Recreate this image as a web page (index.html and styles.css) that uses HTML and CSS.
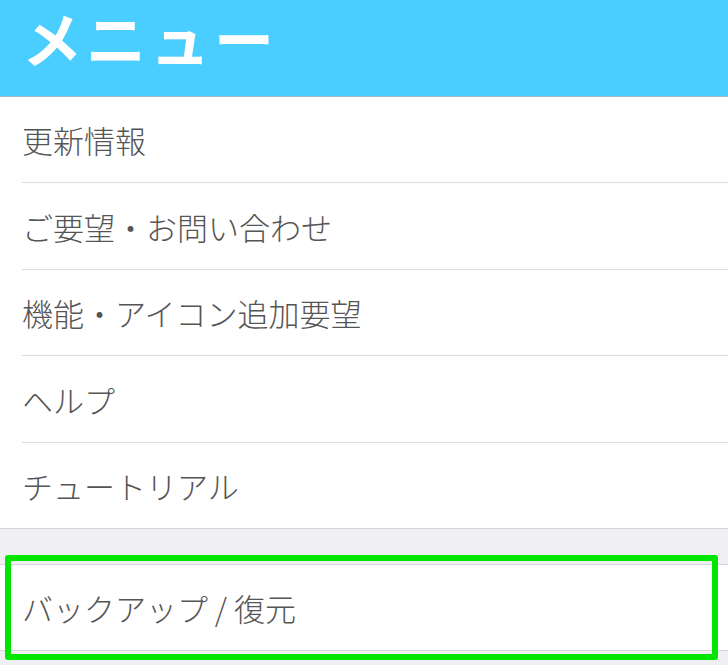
FILE: index.html
```html
<!DOCTYPE html>
<html lang="ja">
<head>
<meta charset="utf-8">
<link rel="stylesheet" href="styles.css">
</head>
<body>
<header class="header"><h1 class="title">メニュー</h1></header>
<ul class="group">
  <li class="row">更新情報</li>
  <li class="row">ご要望・お問い合わせ</li>
  <li class="row">機能・アイコン追加要望</li>
  <li class="row">ヘルプ</li>
  <li class="row last">チュートリアル</li>
</ul>
<div class="gap"></div>
<div class="highlight">
  <ul class="group boxed">
    <li class="row last">バックアップ / 復元</li>
  </ul>
</div>
</body>
</html>
```
FILE: styles.css
```css
*, *::before, *::after { box-sizing: border-box; }
html, body { margin: 0; padding: 0; }
body {
  width: 728px;
  height: 665px;
  overflow: hidden;
  background: #efeff4;
  font-family: "Noto Sans CJK JP", "Noto Sans", sans-serif;
}
.header {
  height: 97px;
  background: #4acdff;
  border-bottom: 1px solid #a9b9c4;
  display: flex;
  align-items: center;
  padding-left: 22px;
  padding-top: 4px;
  padding-bottom: 26px;
}
.title {
  margin: 0;
  color: #fff;
  font-size: 60px;
  font-weight: 700;
  letter-spacing: 4px;
  line-height: 1;
}
.group {
  list-style: none;
  margin: 0;
  padding: 0 0 0 22px;
  background: #fff;
  border-bottom: 1px solid #d6d6da;
}
.row {
  height: 86px;
  display: flex;
  align-items: center;
  font-size: 31px;
  font-weight: 300;
  color: #555;
  border-bottom: 1px solid #dcdcdc;
}
.row:nth-child(even) { height: 87px; }
.row.last { height: 85px; border-bottom: none; }
.gap { height: 35px; }
.highlight {
  position: relative;
}
.boxed {
  border-top: 1px solid #d6d6da;
}
.highlight::after {
  content: "";
  position: absolute;
  left: 5px;
  top: -9px;
  width: 713px;
  height: 105px;
  border: 6px solid #00e600;
  border-radius: 3px;
  pointer-events: none;
}
```
